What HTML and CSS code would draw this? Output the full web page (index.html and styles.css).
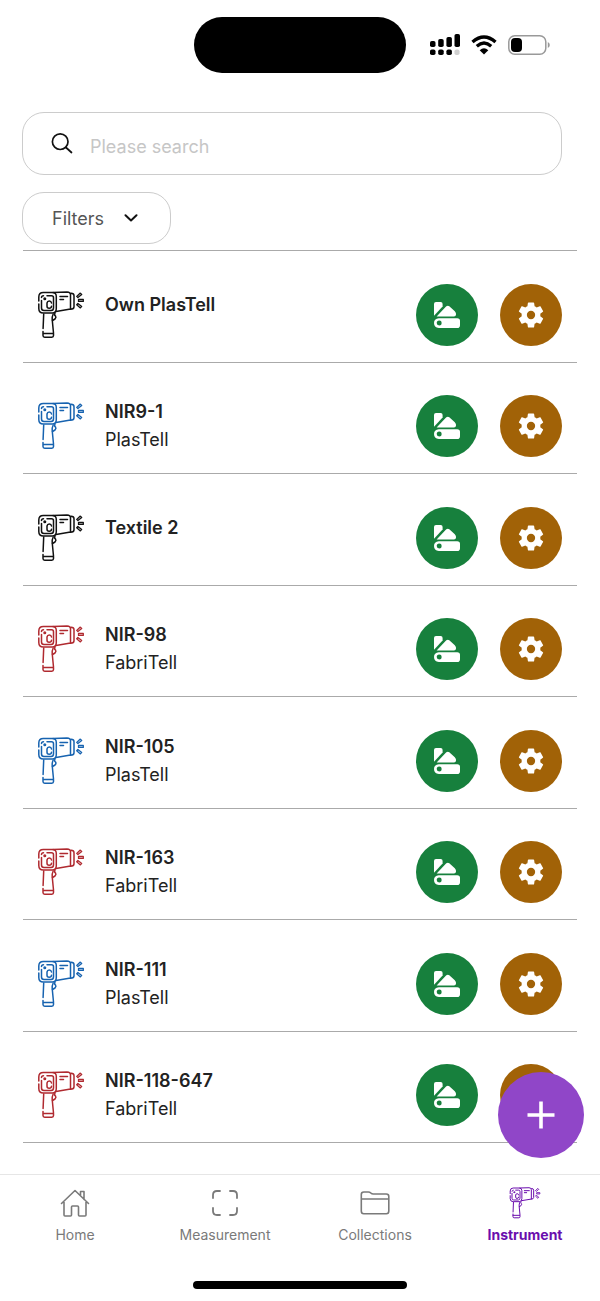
FILE: index.html
```html
<!DOCTYPE html>
<html lang="en">
<head>
<meta charset="utf-8">
<meta name="viewport" content="width=device-width, initial-scale=1">
<title>Instruments</title>
<link rel="stylesheet" href="styles.css">
</head>
<body>
<svg class="sprite" aria-hidden="true">
  <symbol id="gun" viewBox="0 1 48 48">
    <g fill="none" stroke="currentColor" stroke-width="1.500" stroke-linecap="round" stroke-linejoin="round">
      <path d="M1.800 11V7q0-4.500 4.500-4.500h9q4 0 4 4v12q0 4.500-4 4.500H6.300q-4.500 0-4.500-4.500V14"/>
      <path d="M10 5.700h4.500q2 0 2 2v10q0 2.800-2.500 2.800H7q-2.500 0-2.500-2.500v-7.500M4.500 7.500q0-1.800 2-1.800"/>
      <path d="M16 2.500l14-.4q3.500 0 3.500 3v14L19 21.500M34 3.200q3 0 3 2.500v11q0 2.500-3.500 2.600"/>
      <path d="M23 6.500h7.500M23 9.500h3.500"/>
      <path d="M6.700 24l-.6 14.500M16.200 24q-1.200 2.500-1 5.500l1.300 13.500M6 41.500v4q0 1.700 1.700 1.700h7.100q1.700 0 1.700-1.700V43.500H6"/>
      <path d="M18 23q-1 2 .5 3 1 1.500-.5 3l-2.500 1.500"/>
      <path d="M14.500 13q-.3-2-2.200-2T10 13v3.200q0 2 2.200 2t2.300-2"/>
      <circle cx="7.800" cy="8.800" r=".8"/>
    </g>
    <path fill="none" stroke="currentColor" stroke-width="1.300" stroke-linejoin="round" d="M39.700 6.400l3.600-3.300 1.400 1.400-3.800 3.100zM41.500 9.500h4.800v1.900h-4.800zM40.900 13.400l3.800 3-1.300 1.500-3.700-3.200z"/>
  </symbol>
  <symbol id="swatch" viewBox="0 0 26 26">
    <g fill="currentColor">
      <path d="M0 2q0-2 2-2h4.600q2 0 2 2v2.600L0 13.700z"/>
      <path d="M2.600 14.500L12.300 4.300q1.500-1.200 3 0l5.500 5q1.600 1.700 1.200 3.500-.2 1.700-2 1.700z"/>
      <path fill-rule="evenodd" d="M4.800 16.200h18.400q2.800 0 2.800 2.500v4.500q0 2.800-2.800 2.800H4.800Q0 25.700 0 21.100t4.800-4.900zM5.200 18.600a2.500 2.500 0 1 0 .01 5A2.500 2.500 0 0 0 5.200 18.600z"/>
    </g>
  </symbol>
  <symbol id="gear" viewBox="2 2 20 20">
    <path fill="currentColor" d="M19.140 12.940c.04-.3.060-.61.060-.94 0-.32-.02-.64-.07-.94l2.030-1.580c.18-.14.230-.41.120-.61l-1.920-3.320c-.12-.22-.37-.29-.59-.22l-2.390.96c-.5-.38-1.030-.7-1.620-.94l-.36-2.540c-.04-.24-.24-.41-.48-.41h-3.840c-.24 0-.43.17-.47.41l-.36 2.540c-.59.24-1.130.57-1.620.94l-2.390-.96c-.22-.08-.47 0-.59.22L2.740 8.870c-.12.21-.08.47.120.61l2.030 1.580c-.05.3-.09.63-.09.94s.02.640.070.940l-2.030 1.580c-.18.140-.23.410-.12.610l1.920 3.320c.12.220.370.290.590.220l2.390-.96c.5.380 1.030.700 1.620.940l.36 2.540c.05.240.240.410.480.410h3.840c.24 0 .44-.17.470-.41l.36-2.540c.59-.24 1.130-.56 1.620-.94l2.390.96c.22.080.470 0 .590-.22l1.920-3.320c.12-.22.070-.47-.12-.61l-2.010-1.580zM12 15.200a3.200 3.200 0 1 1 0-6.400 3.200 3.200 0 0 1 0 6.400z"/>
  </symbol>
</svg>

<header class="status">
  <div class="island"></div>
  <div class="status-icons">
    <svg width="30" height="22" viewBox="0 0 30 22" aria-hidden="true">
      <rect x="0" y="7" width="5.500" height="6" rx="1.800"/><rect x="8.200" y="5" width="5.500" height="8" rx="1.800"/><rect x="16.400" y="3" width="5.500" height="10" rx="1.800"/><rect x="24.500" y="0" width="5.500" height="13" rx="1.800"/>
      <rect x="0" y="15.500" width="5.500" height="5.500" rx="1.800"/><rect x="8.200" y="15.500" width="5.500" height="5.500" rx="1.800"/><rect x="16.400" y="15.500" width="5.500" height="5.500" rx="1.800"/><rect x="24.500" y="15.500" width="5" height="5.500" rx="1.800" fill="#d0d0d0"/>
    </svg>
    <svg width="26" height="20" viewBox="0 0 26 20" aria-hidden="true">
      <path d="M1.500 7Q13-3 24.500 7M5.800 11.200Q13 5 20.200 11.200" fill="none" stroke="#000" stroke-width="3.400"/>
      <path d="M8.700 15.200Q13 11.500 17.300 15.200L13 19.500z"/>
    </svg>
    <svg width="42" height="20" viewBox="0 0 42 20" aria-hidden="true">
      <rect x=".8" y=".8" width="37" height="18.400" rx="6" fill="none" stroke="#999" stroke-width="1.500"/>
      <rect x="3" y="3" width="11" height="14" rx="4"/>
      <path d="M39.800 7q2 1 2 3t-2 3z" fill="#999"/>
    </svg>
  </div>
</header>

<main class="screen">
  <form class="tools">
    <label class="search">
      <svg width="22" height="22" viewBox="0 0 22 22" fill="none" stroke="#111" stroke-width="1.700" stroke-linecap="round" aria-hidden="true"><circle cx="9.200" cy="8.700" r="7.800"/><path d="M15 14.500l5.500 5"/></svg>
      <input type="search" placeholder="Please search" aria-label="Please search">
    </label>
    <button class="filters" type="button">Filters
      <svg width="14" height="8" viewBox="0 0 14 8" fill="none" stroke="#111" stroke-width="2" stroke-linecap="round" stroke-linejoin="round" aria-hidden="true"><path d="M1.500 1.300L7 6.500l5.500-5.200"/></svg>
    </button>
  </form>

  <ul class="list">
    <li class="row">
      <svg class="gun"><use href="#gun"/></svg>
      <div class="info"><h2 class="name alone">Own PlasTell</h2></div>
      <button class="round green" aria-label="Swatches"><svg><use href="#swatch"/></svg></button>
      <button class="round brown" aria-label="Settings"><svg><use href="#gear"/></svg></button>
    </li>
    <li class="row">
      <svg class="gun blue"><use href="#gun"/></svg>
      <div class="info"><h2 class="name">NIR9-1</h2><p class="kind">PlasTell</p></div>
      <button class="round green" aria-label="Swatches"><svg><use href="#swatch"/></svg></button>
      <button class="round brown" aria-label="Settings"><svg><use href="#gear"/></svg></button>
    </li>
    <li class="row">
      <svg class="gun"><use href="#gun"/></svg>
      <div class="info"><h2 class="name alone">Textile 2</h2></div>
      <button class="round green" aria-label="Swatches"><svg><use href="#swatch"/></svg></button>
      <button class="round brown" aria-label="Settings"><svg><use href="#gear"/></svg></button>
    </li>
    <li class="row">
      <svg class="gun red"><use href="#gun"/></svg>
      <div class="info"><h2 class="name">NIR-98</h2><p class="kind">FabriTell</p></div>
      <button class="round green" aria-label="Swatches"><svg><use href="#swatch"/></svg></button>
      <button class="round brown" aria-label="Settings"><svg><use href="#gear"/></svg></button>
    </li>
    <li class="row">
      <svg class="gun blue"><use href="#gun"/></svg>
      <div class="info"><h2 class="name">NIR-105</h2><p class="kind">PlasTell</p></div>
      <button class="round green" aria-label="Swatches"><svg><use href="#swatch"/></svg></button>
      <button class="round brown" aria-label="Settings"><svg><use href="#gear"/></svg></button>
    </li>
    <li class="row">
      <svg class="gun red"><use href="#gun"/></svg>
      <div class="info"><h2 class="name">NIR-163</h2><p class="kind">FabriTell</p></div>
      <button class="round green" aria-label="Swatches"><svg><use href="#swatch"/></svg></button>
      <button class="round brown" aria-label="Settings"><svg><use href="#gear"/></svg></button>
    </li>
    <li class="row">
      <svg class="gun blue"><use href="#gun"/></svg>
      <div class="info"><h2 class="name">NIR-111</h2><p class="kind">PlasTell</p></div>
      <button class="round green" aria-label="Swatches"><svg><use href="#swatch"/></svg></button>
      <button class="round brown" aria-label="Settings"><svg><use href="#gear"/></svg></button>
    </li>
    <li class="row">
      <svg class="gun red"><use href="#gun"/></svg>
      <div class="info"><h2 class="name">NIR-118-647</h2><p class="kind">FabriTell</p></div>
      <button class="round green" aria-label="Swatches"><svg><use href="#swatch"/></svg></button>
      <button class="round brown" aria-label="Settings"><svg><use href="#gear"/></svg></button>
    </li>
  </ul>
  <button class="fab" aria-label="Add instrument">
    <svg width="28" height="28" viewBox="0 0 28 28" stroke="#fff" stroke-width="3.600" aria-hidden="true"><path d="M14 .5v27M.5 14h27"/></svg>
  </button>
</main>

<footer class="bottom">
  <nav class="tabs">
    <a class="tab" href="#home">
      <svg viewBox="0 0 32 32" fill="none" stroke="currentColor" stroke-width="1.600" stroke-linecap="round" stroke-linejoin="round" aria-hidden="true"><path d="M2.500 16.500L16 3.500l13.500 13M5 15v13q0 1 1 1h5.500q1 0 1-1v-8q0-1 1-1h5q1 0 1 1v8q0 1 1 1H26q1 0 1-1V15M21.500 8V4.500H25v8"/></svg>
      Home
    </a>
    <a class="tab" href="#measurement">
      <svg viewBox="0 0 32 32" fill="none" stroke="currentColor" stroke-width="1.800" stroke-linecap="round" aria-hidden="true"><path d="M4 11V8q0-4 4-4h3M21 4h3q4 0 4 4v3M28 21v3q0 4-4 4h-3M11 28H8q-4 0-4-4v-3"/></svg>
      Measurement
    </a>
    <a class="tab" href="#collections">
      <svg viewBox="0 0 32 32" fill="none" stroke="currentColor" stroke-width="1.600" stroke-linecap="round" stroke-linejoin="round" aria-hidden="true"><path d="M2.300 24V7.500Q2.300 5 4.800 5h4.500q1.500 0 2.500 1t2.500 1h13q2.500 0 2.500 2.500V24q0 2.800-2.500 2.800H4.800Q2.300 26.800 2.300 24zM2.300 12H29.800"/></svg>
      Collections
    </a>
    <a class="tab active" href="#instrument" aria-current="page">
      <svg aria-hidden="true"><use href="#gun"/></svg>
      Instrument
    </a>
  </nav>
  <div class="home-bar"></div>
</footer>
</body>
</html>
```
FILE: styles.css
```css
* { box-sizing: border-box; }

body {
  margin: 0;
  min-height: 100vh;
  display: flex;
  flex-direction: column;
  background: #fff;
  color: #222;
  font-family: Inter, "Liberation Sans", sans-serif;
}

button {
  border: 0;
  padding: 0;
  font: inherit;
  cursor: pointer;
}

.sprite { display: none; }

.status {
  display: grid;
  grid-template-columns: 1fr 212px 1fr;
  column-gap: 24px;
  align-items: center;
  padding-top: 17px;
}

.island {
  grid-column: 2;
  height: 56px;
  border-radius: 28px;
  background: #000;
}

.status-icons {
  display: flex;
  align-items: center;
  gap: 11px;
}

.screen {
  position: relative;
  flex: 1;
  display: flex;
  flex-direction: column;
  padding: 39px 23px 31px 22px;
}

.tools {
  display: flex;
  flex-direction: column;
  align-items: flex-start;
  gap: 17px;
  padding: 0 15px 6px 0;
}

.search {
  display: flex;
  align-items: center;
  gap: 17px;
  width: 100%;
  height: 63px;
  padding: 0 28px;
  border: 1px solid #ccc;
  border-radius: 22px;
}

.search input {
  flex: 1;
  min-width: 0;
  padding: 6px 0 0;
  border: 0;
  outline: 0;
  background: none;
  font: 18px/24px Inter, sans-serif;
  color: #222;
}

.search input::placeholder { color: #c6c6c6; }

.filters {
  display: flex;
  align-items: center;
  gap: 20px;
  height: 52px;
  padding: 0 32px 0 29px;
  border: 1px solid #ccc;
  border-radius: 22px;
  background: #fff;
  color: #555;
  font-size: 18px;
}

.list {
  flex: 1;
  display: flex;
  flex-direction: column;
  margin: 0 0 0 1px;
  padding: 0;
  list-style: none;
  border-top: 1px solid #aaa;
}

.row {
  flex: 1;
  display: flex;
  align-items: center;
  gap: 22px;
  padding: 32px 15px 15px 14px;
  border-bottom: 1px solid #aaa;
}

.gun {
  width: 48px;
  height: 48px;
  margin-right: -2px;
  color: #111;
}

.blue { color: #1763b0; }
.red { color: #b02a30; }

.info { flex: 1; }

.name, .kind {
  margin: 0;
  font-size: 18px;
  line-height: 28px;
  font-weight: 400;
}

.name { font-weight: 600; }
.alone { margin-bottom: 20px; }

.round {
  display: grid;
  place-items: center;
  width: 62px;
  height: 62px;
  border-radius: 50%;
  color: #fff;
}

.round svg {
  width: 26px;
  height: 26px;
}

.green { background: #17803d; }
.brown { background: #a16207; }

.fab {
  position: absolute;
  right: 16px;
  bottom: 16px;
  display: grid;
  place-items: center;
  width: 86px;
  height: 86px;
  border-radius: 50%;
  background: #9046c8;
}

.bottom {
  border-top: 1px solid #e6e6e6;
  padding-bottom: 12px;
}

.tabs {
  display: grid;
  grid-template-columns: repeat(4, 1fr);
  padding: 12px 0 36px;
}

.tab {
  display: flex;
  flex-direction: column;
  align-items: center;
  gap: 6px;
  color: #7a7a7a;
  font-size: 14px;
  line-height: 20px;
  text-decoration: none;
}

.tab svg {
  width: 32px;
  height: 32px;
}

.active {
  color: #6a0dad;
  font-weight: 700;
}

.home-bar {
  width: 214px;
  height: 8px;
  margin: 0 auto;
  border-radius: 4px;
  background: #000;
}
```
